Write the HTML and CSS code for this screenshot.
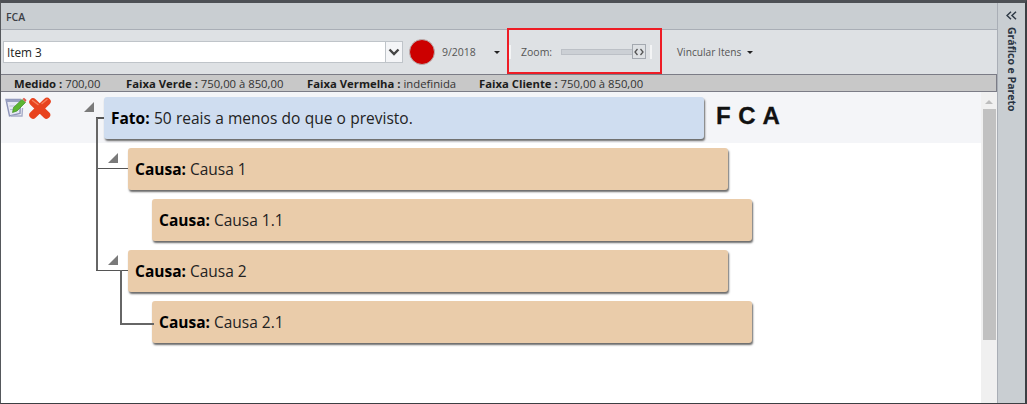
FILE: index.html
```html
<!DOCTYPE html>
<html lang="pt">
<head>
<meta charset="utf-8">
<title>FCA</title>
<link rel="stylesheet" href="styles.css">
</head>
<body>
<div class="window">
  <main class="main">
    <header class="titlebar">FCA</header>
    <div class="toolbar">
      <div class="combo">
        <span class="combo-text">Item 3</span>
        <span class="combo-btn">
          <svg width="12" height="8" viewBox="0 0 12 8"><path d="M1.500 1.500 6 6l4.500-4.500" fill="none" stroke="#444" stroke-width="2.400"/></svg>
        </span>
      </div>
      <span class="status-dot"></span>
      <span class="period">9/2018</span>
      <span class="caret caret-period"></span>
      <div class="zoom-box">
        <span class="sep"></span>
        <span class="zoom-label">Zoom:</span>
        <span class="track"></span>
        <span class="thumb">
          <svg width="10" height="8" viewBox="0 0 10 8"><path d="M3.500 1 1 4l2.500 3M6.500 1 9 4 6.500 7" fill="none" stroke="#555" stroke-width="1.300"/></svg>
        </span>
        <span class="sep sep-end"></span>
      </div>
      <span class="link-label">Vincular Itens</span>
      <span class="caret caret-link"></span>
    </div>
    <div class="stats">
      <span class="stat stat-a"><b>Medido :</b> 700,00</span>
      <span class="stat stat-b"><b>Faixa Verde :</b> 750,00 à 850,00</span>
      <span class="stat stat-c"><b>Faixa Vermelha :</b> indefinida</span>
      <span class="stat stat-d"><b>Faixa Cliente :</b> 750,00 à 850,00</span>
    </div>
    <div class="content">
      <div class="canvas">
        <div class="band"></div>
        <div class="actions">
          <svg width="22" height="22" viewBox="0 0 22 22">
            <path d="M1 2.500h14.500l-.5 14-10.500 2.500z" fill="#e6e8f4" stroke="#8d94b8" stroke-width="1.400"/>
            <path d="M1 2.500h14.500v2.500H1.500z" fill="#9aa1c2"/>
            <path d="M4.500 9h6M5 12.500h4" stroke="#b4b9d2" stroke-width="1"/>
            <path d="M6 19h11l.5-8" fill="none" stroke="#a6acc8" stroke-width="1.400"/>
            <path d="M8.500 10.500 17 2.500l3.500 3L12 14l-4.500 1.500z" fill="#5cb531" stroke="#3f8f22" stroke-width=".7"/>
            <path d="M17.500 2 19 .8l2.500 2.200-1 2z" fill="#e0584a"/>
          </svg>
          <svg width="22" height="22" viewBox="0 0 22 22">
            <path d="M4 5 17.500 18M18 4.500 4 18" fill="none" stroke="#e8431f" stroke-width="7.500" stroke-linecap="round"/>
            <path d="M3.500 3.500 9 7.500M18 2.500 13 6.500" fill="none" stroke="#f7805c" stroke-width="1.500" stroke-linecap="round"/>
          </svg>
        </div>
        <span class="fca-mark">F C A</span>
        <div class="tree">
          <div class="node node-fact"><span class="tri"></span><b>Fato:</b> 50 reais a menos do que o previsto.</div>
          <div class="branch">
            <div class="node node-cause level-1 link-h"><span class="tri"></span><b>Causa:</b> Causa 1</div>
            <div class="node node-cause level-2"><b>Causa:</b> Causa 1.1</div>
            <div class="node node-cause level-1 link-h"><span class="tri"></span><b>Causa:</b> Causa 2</div>
            <div class="node node-cause level-2 link-v"><b>Causa:</b> Causa 2.1</div>
            <span class="trunk"></span>
          </div>
        </div>
      </div>
      <div class="scrollbar">
        <span class="scroll-up"></span>
        <span class="scroll-thumb"></span>
      </div>
    </div>
  </main>
  <aside class="side">
    <svg class="side-icon" width="11" height="9" viewBox="0 0 11 9"><path d="M5 .8 1 4.500l4 3.700M10 .8 6 4.500l4 3.700" fill="none" stroke="#2f3a46" stroke-width="1.500"/></svg>
    <span class="side-label">Gráfico e Pareto</span>
  </aside>
</div>
</body>
</html>
```

FILE: styles.css
```css
* { box-sizing: border-box; }

html, body {
  margin: 0;
  width: 1027px;
  height: 404px;
  overflow: hidden;
  font-family: "Open Sans", "Noto Sans", sans-serif;
  color: #222;
}

.window {
  display: flex;
  width: 1027px;
  height: 404px;
  border-top: 3px solid #4d5055;
  border-left: 1px solid #55585c;
  border-right: 2px solid #3c3f43;
  border-bottom: 1px solid #3c3f43;
}

.main {
  width: 996px;
  display: flex;
  flex-direction: column;
}

.titlebar {
  height: 27px;
  padding: 4px 0 0 5px;
  background: #c9ced2;
  border-bottom: 1px solid #a9aeb6;
  font-size: 10.500px;
  font-weight: 600;
  line-height: 20px;
  color: #3c3f46;
}

.toolbar {
  height: 44px;
  flex: none;
  display: flex;
  align-items: center;
  padding-left: 2px;
  background: #dee1e4;
  font-size: 10.500px;
  color: #555;
}

.combo {
  width: 400px;
  height: 22px;
  display: flex;
  background: #fff;
  border: 1px solid #bfc4c9;
}

.combo-text {
  flex: 1;
  padding-left: 3px;
  font-size: 11.800px;
  line-height: 20px;
  color: #222;
}

.combo-btn {
  width: 17px;
  display: flex;
  align-items: center;
  justify-content: center;
  background: #f4f5f7;
  border-left: 1px solid #bfc4c9;
}

.status-dot {
  width: 26px;
  height: 26px;
  margin-left: 6px;
  border-radius: 50%;
  background: #cc0000;
  border: 1px solid #b8b0b0;
}

.period {
  margin-left: 7px;
  width: 52px;
}

.caret {
  width: 0;
  height: 0;
  border-left: 3px solid transparent;
  border-right: 3px solid transparent;
  border-top: 3px solid #222;
}

.caret-period { margin-top: 1px; }

.zoom-box {
  position: relative;
  display: flex;
  align-items: center;
  width: 155px;
  height: 46px;
  margin: -2px 0 0 7px;
  border: 2px solid #ee1c25;
  padding-top: 1px;
}

.sep {
  width: 2px;
  height: 14px;
  background: #f3f4f5;
}

.zoom-label {
  margin-left: 10px;
  width: 40px;
}

.track {
  width: 72px;
  height: 6px;
  background: #ccd0d5;
  border: 1px solid #bcc0c6;
}

.thumb {
  width: 14px;
  height: 15px;
  margin-left: -1px;
  display: flex;
  align-items: center;
  justify-content: center;
  background: #dee1e4;
  border: 1px solid #a4a9b0;
}

.sep-end { margin-left: 4px; }

.link-label {
  margin-left: 15px;
  width: 70px;
  font-size: 10.200px;
}

.stats {
  position: relative;
  height: 18px;
  flex: none;
  background: #c8c8c8;
  border: 1px solid #7b7c86;
  border-left: 0;
  font-size: 11.300px;
  line-height: 17px;
  color: #333;
}

.stats b { color: #1c1c1c; font-weight: 700; }

.stat { position: absolute; top: 0; white-space: nowrap; }
.stat-a { left: 13px; }
.stat-b { left: 125px; }
.stat-c { left: 306px; }
.stat-d { left: 478px; }

.content {
  flex: 1;
  display: flex;
  min-height: 0;
}

.canvas {
  position: relative;
  flex: 1;
  background: #fff;
}

.band {
  height: 51px;
  background: #f4f5f8;
}

.actions {
  position: absolute;
  left: 4px;
  top: 5px;
  display: flex;
  gap: 2px;
}

.fca-mark {
  position: absolute;
  left: 715px;
  top: 10px;
  font-family: "Liberation Sans", Arial, sans-serif;
  font-size: 24px;
  font-weight: 700;
  letter-spacing: .5px;
  line-height: 28px;
  color: #111;
  white-space: nowrap;
  -webkit-text-stroke: .3px #111;
}

.tree {
  position: absolute;
  left: 103px;
  top: 5px;
}

.node {
  position: relative;
  width: 600px;
  height: 42px;
  margin-bottom: 9px;
  padding-left: 7px;
  border-radius: 3px;
  box-shadow: 1px 2px 2px #6a6a6a;
  font-size: 15.500px;
  line-height: 42px;
  color: #222;
  white-space: nowrap;
}

.node b { color: #000; font-weight: 700; }

.node-fact { background: #cfddf0; word-spacing: .25px; }
.node-cause { background: #eaccaa; }
.level-1 { margin-left: 24px; }
.level-2 { margin-left: 48px; }

.tri {
  position: absolute;
  left: -20px;
  top: 5px;
  width: 0;
  height: 0;
  border-left: 10px solid transparent;
  border-bottom: 10px solid #7a7a7a;
}

.node-fact::before {
  content: "";
  position: absolute;
  left: -8px;
  top: 20px;
  width: 8px;
  height: 2px;
  background: #555;
}

.branch { position: relative; }

.trunk {
  position: absolute;
  left: -8px;
  top: -30px;
  width: 2px;
  height: 152px;
  background: #666;
}

.link-h::before {
  content: "";
  position: absolute;
  left: -32px;
  top: 20px;
  width: 32px;
  height: 1px;
  background: #555;
}

.link-v::before {
  content: "";
  position: absolute;
  left: -32px;
  top: -31px;
  width: 32px;
  height: 53px;
  border-left: 2px solid #666;
  border-bottom: 2px solid #666;
}

.scrollbar {
  width: 16px;
  flex: none;
  background: #f0f0f0;
  display: flex;
  flex-direction: column;
  align-items: center;
}

.scroll-up {
  margin-top: 8px;
  width: 0;
  height: 0;
  border-left: 4px solid transparent;
  border-right: 4px solid transparent;
  border-bottom: 4px solid #bdbdbd;
}

.scroll-thumb {
  width: 13px;
  height: 231px;
  margin-top: 5px;
  background: #c1c1c1;
}

.side {
  flex: 1;
  display: flex;
  flex-direction: column;
  align-items: center;
  padding-top: 8px;
  background: #c9ced2;
  border-left: 1px solid #a9aeb6;
}

.side-icon { flex: none; }

.side-label {
  margin-top: 7px;
  writing-mode: vertical-rl;
  font-size: 10.500px;
  font-weight: 700;
  line-height: 14px;
  color: #2a3442;
  white-space: nowrap;
}
```
